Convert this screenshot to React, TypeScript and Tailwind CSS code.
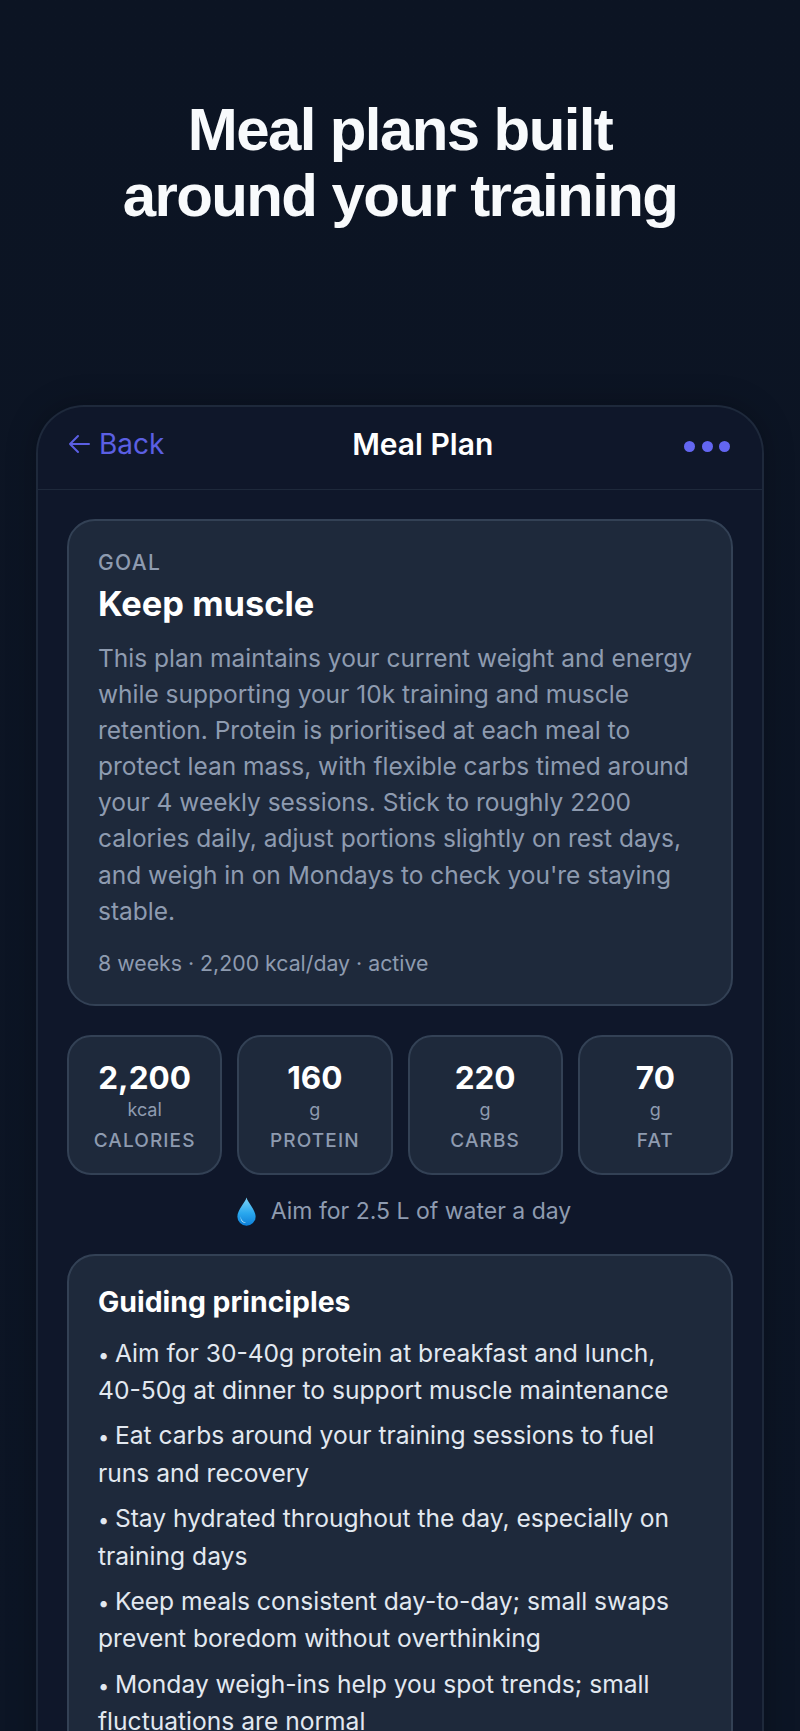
const stats = [
  { value: "2,200", unit: "kcal", label: "CALORIES" },
  { value: "160", unit: "g", label: "PROTEIN" },
  { value: "220", unit: "g", label: "CARBS" },
  { value: "70", unit: "g", label: "FAT" },
];

const principles = [
  "Aim for 30-40g protein at breakfast and lunch, 40-50g at dinner to support muscle maintenance",
  "Eat carbs around your training sessions to fuel runs and recovery",
  "Stay hydrated throughout the day, especially on training days",
  "Keep meals consistent day-to-day; small swaps prevent boredom without overthinking",
  "Monday weigh-ins help you spot trends; small fluctuations are normal",
];

const WaterDrop = () => (
  <svg width="21" height="29" viewBox="0 0 20 28" className="shrink-0">
    <defs>
      <linearGradient id="drop" x1="0" y1="0" x2="0" y2="1">
        <stop offset="0" stopColor="#7fd4f7" />
        <stop offset="0.55" stopColor="#2aa8ee" />
        <stop offset="1" stopColor="#0d7fd8" />
      </linearGradient>
    </defs>
    <path d="M10 0.5C11 5 18.8 12.5 18.8 19A8.8 8.8 0 0 1 1.2 19C1.2 12.5 9 5 10 0.5Z" fill="url(#drop)" />
    <path d="M4.5 18.5C4.5 22 6.5 24.2 9.5 24.6C7 25.5 3.6 22.8 4.5 18.5Z" fill="#c5ecfc" />
  </svg>
);

const BackArrow = () => (
  <svg width="22" height="20" viewBox="0 0 22 20" fill="none" stroke="currentColor" strokeWidth="2" strokeLinecap="round" strokeLinejoin="round">
    <path d="M21 10H2M10 2L2 10L10 18" />
  </svg>
);

export default function App() {
  return (
    <div className="h-[1731px] overflow-hidden bg-gradient-to-b from-[#0c1423] to-[#0c1525] font-['Inter',sans-serif]">
      <h1 className="pt-[97px] text-center font-['Liberation_Sans',sans-serif] text-[60px] leading-[66px] font-bold tracking-[-1.6px] text-[#f8fafc]">
        Meal plans built
        <br />
        around your training
      </h1>

      <div className="mx-[36px] mt-[176px] rounded-t-[48px] border-2 border-b-0 border-[#1e293b] bg-[#0f172a] shadow-[0_0_30px_rgba(0,0,0,0.25)]">
        <div className="flex h-[83px] items-center justify-between border-b border-[#1e293b] pr-[32px] pb-[8px] pl-[30px]">
          <div className="flex items-center gap-[9px] text-[28px] text-[#5b5fe3]">
            <BackArrow />
            <span>Back</span>
          </div>
          <div className="mr-[3px] text-[30px] font-semibold text-white">Meal Plan</div>
          <div className="mt-[5px] flex gap-[6.5px]">
            <span className="size-[11px] rounded-full bg-[#6366f1]" />
            <span className="size-[11px] rounded-full bg-[#6366f1]" />
            <span className="size-[11px] rounded-full bg-[#6366f1]" />
          </div>
        </div>

        <div className="px-[29px] pt-[29px]">
          <div className="rounded-[28px] border-2 border-[#334155] bg-[#1e293b] px-[29px] pt-[30px] pb-[27px]">
            <div className="text-[21px] leading-[24px] font-[550] tracking-[1.4px] text-[#8e9bb0]">GOAL</div>
            <div className="mt-[8px] text-[34.4px] leading-[42px] font-bold text-white">Keep muscle</div>
            <p className="mt-[15px] text-[24.5px] leading-[36.1px] text-[#8e9bb0]">
              This plan maintains your current weight and energy while supporting your 10k training and muscle retention. Protein is prioritised at each meal to protect lean mass, with flexible carbs timed around your 4 weekly sessions. Stick to roughly 2200 calories daily, adjust portions slightly on rest days, and weigh in on Mondays to check you're staying stable.
            </p>
            <div className="mt-[20px] text-[21.3px] leading-[28px] text-[#8e9bb0]">8 weeks · 2,200 kcal/day · active</div>
          </div>

          <div className="mt-[29px] grid grid-cols-4 gap-[15px]">
            {stats.map((s) => (
              <div key={s.label} className="flex h-[140px] flex-col items-center rounded-[24px] border-2 border-[#334155] bg-[#1e293b] pt-[22px]">
                <div className="text-[31.5px] leading-[38px] font-bold text-white">{s.value}</div>
                <div className="mt-[1px] text-[18px] leading-[24px] text-[#8e9bb0]">{s.unit}</div>
                <div className="mt-[6px] text-[19px] leading-[26px] font-[550] tracking-[1.1px] text-[#8e9bb0]">{s.label}</div>
              </div>
            ))}
          </div>

          <div className="mt-[22px] flex items-center justify-center gap-[14px] pl-[7px] text-[23px] leading-[28px] text-[#8e9bb0]">
            <WaterDrop />
            <span>Aim for 2.5 L of water a day</span>
          </div>

          <div className="mt-[28px] rounded-[28px] border-2 border-[#334155] bg-[#1e293b] px-[29px] pt-[28px] pb-[40px]">
            <div className="text-[28.4px] leading-[36px] font-bold text-white">Guiding principles</div>
            <div className="mt-[15px] flex flex-col gap-[7.5px]">
              {principles.map((p) => (
                <p key={p} className="text-[24.6px] leading-[37.6px] text-[#e2e8f0]">
                  <span className="text-[20px] leading-[0]">• </span>
                  {p}
                </p>
              ))}
            </div>
          </div>
        </div>
      </div>
    </div>
  );
}
